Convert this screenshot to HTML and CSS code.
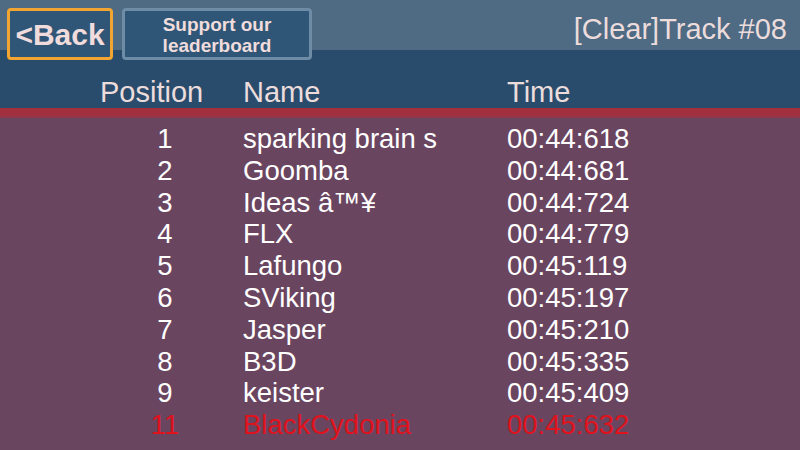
FILE: index.html
```html
<!DOCTYPE html>
<html>
<head>
<meta charset="utf-8">
<link rel="stylesheet" href="styles.css">
</head>
<body>
<div class="screen">
  <div class="topbar">
    <div class="btn back">&lt;Back</div>
    <div class="btn support">Support our<br>leaderboard</div>
    <div class="title">[Clear]Track #08</div>
  </div>
  <div class="head">
    <div class="c-pos">Position</div>
    <div class="c-name">Name</div>
    <div class="c-time">Time</div>
  </div>
  <div class="stripe"></div>
  <div class="list">
    <div class="row"><div class="c-pos">1</div><div class="c-name">sparking brain s</div><div class="c-time">00:44:618</div></div>
    <div class="row"><div class="c-pos">2</div><div class="c-name">Goomba</div><div class="c-time">00:44:681</div></div>
    <div class="row"><div class="c-pos">3</div><div class="c-name">Ideas â™¥</div><div class="c-time">00:44:724</div></div>
    <div class="row"><div class="c-pos">4</div><div class="c-name">FLX</div><div class="c-time">00:44:779</div></div>
    <div class="row"><div class="c-pos">5</div><div class="c-name">Lafungo</div><div class="c-time">00:45:119</div></div>
    <div class="row"><div class="c-pos">6</div><div class="c-name">SViking</div><div class="c-time">00:45:197</div></div>
    <div class="row"><div class="c-pos">7</div><div class="c-name">Jasper</div><div class="c-time">00:45:210</div></div>
    <div class="row"><div class="c-pos">8</div><div class="c-name">B3D</div><div class="c-time">00:45:335</div></div>
    <div class="row"><div class="c-pos">9</div><div class="c-name">keister</div><div class="c-time">00:45:409</div></div>
    <div class="row me"><div class="c-pos">11</div><div class="c-name">BlackCydonia</div><div class="c-time">00:45:632</div></div>
  </div>
</div>
</body>
</html>
```
FILE: styles.css
```css
html, body {
  margin: 0;
  padding: 0;
  width: 800px;
  height: 450px;
  overflow: hidden;
  background: #6a4560;
  font-family: "Liberation Sans", Arial, sans-serif;
}
.screen {
  width: 800px;
  height: 450px;
  display: flex;
  flex-direction: column;
  background: #6a4560;
}
.topbar {
  height: 50px;
  background: #4f6a83;
  display: flex;
  align-items: flex-start;
  position: relative;
  z-index: 1;
}
.btn {
  box-sizing: border-box;
  height: 52px;
  margin-top: 8px;
  border-radius: 4px;
  background: #2f5676;
  color: #f0dcdc;
  font-weight: bold;
  display: flex;
  align-items: center;
  justify-content: center;
  text-align: center;
}
.back {
  width: 106px;
  margin-left: 7px;
  border: 3px solid #f3a531;
  font-size: 30px;
  padding-top: 2px;
}
.support {
  width: 190px;
  margin-left: 9px;
  border: 3px solid #6f8ca6;
  font-size: 19px;
  line-height: 21px;
  padding-top: 2px;
}
.title {
  margin-left: auto;
  margin-right: 13px;
  margin-top: 12px;
  color: #ecdcdc;
  font-size: 29px;
  line-height: 34px;
}
.head {
  height: 58px;
  background: #2a4c6c;
  display: flex;
  align-items: flex-start;
  color: #ecdcdc;
  font-size: 29px;
  line-height: 34px;
  padding-top: 25px;
  box-sizing: border-box;
}
.head .c-pos { width: 100px; margin-left: 100px; text-align: left; }
.head .c-name { width: 264px; margin-left: 43px; }
.stripe {
  height: 10px;
  background: linear-gradient(#a32f3d 0, #a3303f 70%, #8a3a50 100%);
}
.list {
  padding-top: 5px;
  display: flex;
  flex-direction: column;
}
.row {
  display: flex;
  height: 31.8px;
  line-height: 31.8px;
  color: #ffffff;
  font-size: 27.5px;
}
.row .c-pos { width: 100px; margin-left: 115px; text-align: center; }
.row .c-name { width: 264px; margin-left: 28px; }
.row.me { color: #e0121c; }
```
